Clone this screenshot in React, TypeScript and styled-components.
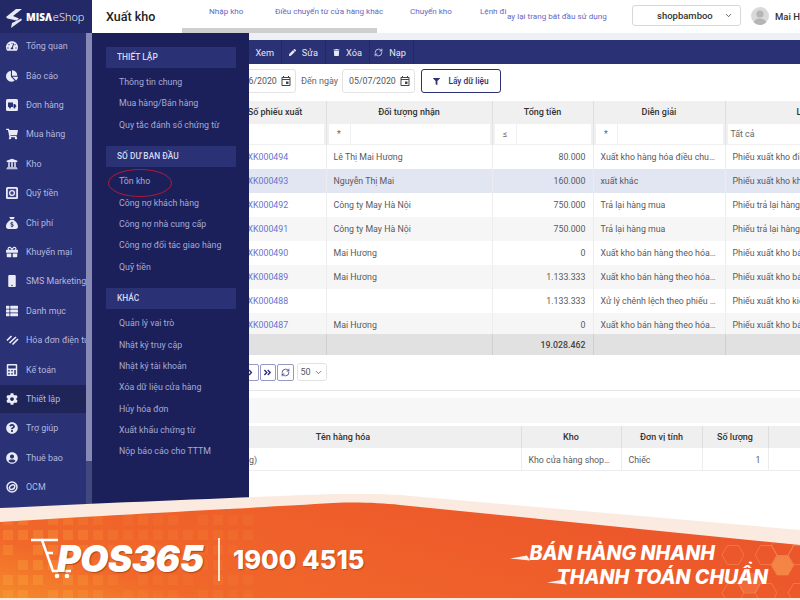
import React from 'react'
import styled, { createGlobalStyle } from 'styled-components'
import {
  FaTachometerAlt, FaChartPie, FaShoppingCart, FaUniversity, FaGift, FaMobile,
  FaThList, FaCalculator, FaCog, FaQuestionCircle, FaUserCircle, FaPen, FaTrash, FaFilter,
  FaAngleRight, FaAngleDoubleRight,
} from 'react-icons/fa'
import { FaSackDollar } from 'react-icons/fa6'
import { MdOutlineEvent } from 'react-icons/md'
import { RefreshCw, ChevronDown } from 'lucide-react'

const GlobalStyle = createGlobalStyle`
  html, body { margin: 0; padding: 0; background: #fff; }
  body { font-family: Roboto, "Liberation Sans", sans-serif; }
  * { box-sizing: border-box; }
`

const Page = styled.div`
  position: relative;
  width: 800px;
  height: 600px;
  overflow: hidden;
  display: flex;
  background: #fff;
`

/* ---------- left nav ---------- */
const Sidebar = styled.aside`
  position: relative;
  flex: 0 0 92px;
  height: 600px;
  background: #2b3175;
  overflow: hidden;
`
const Logo = styled.div`
  height: 33px;
  background: #232966;
  display: flex;
  align-items: center;
  gap: 3px;
  padding-left: 6px;
  color: #fff;
`
const LogoText = styled.span`
  font-family: "Open Sans", sans-serif;
  font-size: 11px;
  font-weight: 300;
  white-space: nowrap;
  b { font-weight: 800; font-size: 10px; margin-right: 1px; }
`
const Nav = styled.nav`
  margin-top: -1.4px;
`
const NavItem = styled.div<{ $active?: boolean }>`
  height: 29.4px;
  display: flex;
  align-items: center;
  border-block: 1.4px solid transparent;
  background: ${(p) => (p.$active ? '#1f2459' : 'transparent')};
  background-clip: padding-box;
  color: #b4b8de;
  font-size: 8.9px;
  white-space: nowrap;
`
const NavIcon = styled.span`
  flex: 0 0 26px;
  display: flex;
  justify-content: center;
  padding-right: 2px;
  color: #e9ebf7;
  font-size: 12px;
`
const NavScroll = styled.div`
  position: absolute;
  top: 33px;
  right: 0;
  bottom: 0;
  width: 6px;
  background: #41477f;
  &::before {
    content: '';
    display: block;
    height: 428px;
    background: #868ab4;
  }
`

const Flyout = styled.div`
  position: absolute;
  z-index: 3;
  left: 92px;
  top: 33px;
  width: 157px;
  height: 480px;
  background: #1b205a;
  padding: 14px 13px 0 14px;
`
const FlyHead = styled.div`
  height: 21px;
  background: #2b3175;
  color: #d5d8ee;
  font-size: 8.4px;
  font-weight: 500;
  line-height: 21px;
  padding-left: 11px;
`
const FlyItem = styled.div<{ $marked?: boolean }>`
  position: relative;
  height: 21.4px;
  line-height: 21.4px;
  padding-left: 13px;
  color: #a6aad4;
  font-size: 8.8px;
  white-space: nowrap;
  ${(p) =>
    p.$marked &&
    `&::after {
      content: '';
      position: absolute;
      left: 2px;
      top: -2px;
      width: 62px;
      height: 26px;
      border: 1.5px solid #a81a3a;
      border-radius: 50%;
    }`}
`
const FlyGroup = styled.div`
  padding: 4px 0 10px;
`

/* ---------- main ---------- */
const Main = styled.main`
  flex: 1;
  min-width: 0;
  display: flex;
  flex-direction: column;
  overflow: hidden;
`
const TopBar = styled.header`
  position: relative;
  flex: 0 0 33px;
  display: flex;
  background: #fff;
`
const Title = styled.div`
  flex: 0 0 117px;
  padding: 9px 0 0 14px;
  font-size: 12.5px;
  font-weight: 500;
  color: #222;
`
const Tabs = styled.div`
  flex: 0 0 298px;
  display: flex;
  overflow: hidden;
  padding-top: 6px;
  white-space: nowrap;
`
const Tab = styled.span<{ $w: number }>`
  flex: 0 0 ${(p) => p.$w}px;
  font-size: 8.1px;
  color: #6169c4;
`
const TabThumb = styled.div`
  position: absolute;
  left: 90px;
  bottom: 0;
  width: 195px;
  height: 5px;
  background: #cfcfcf;
`
const BackLink = styled.span`
  flex: 0 0 108px;
  padding-top: 11px;
  font-size: 8.1px;
  color: #6169c4;
  white-space: nowrap;
`
const TopDivider = styled.span`
  width: 1px;
  height: 18px;
  margin-top: 8px;
  background: #e6e6e6;
`
const ShopSelect = styled.div`
  flex: 0 0 109px;
  height: 21px;
  margin: 5px 0 0 17px;
  border: 1px solid #d8d8d8;
  border-radius: 3px;
  display: flex;
  align-items: center;
  justify-content: space-between;
  padding: 0 7px 0 24px;
  font-size: 9.5px;
  font-weight: 500;
  color: #333;
`
const Avatar = styled.span`
  flex: 0 0 18px;
  height: 18px;
  margin: 7px 0 0 10px;
  border-radius: 50%;
  background: #d9d9d9;
  overflow: hidden;
`
const UserName = styled.span`
  margin: 11px 0 0 6px;
  font-size: 9.5px;
  font-weight: 500;
  color: #333;
  white-space: nowrap;
`
const Strip = styled.div`
  flex: 0 0 7px;
  background: #eff0f3;
`
const Toolbar = styled.div`
  flex: 0 0 24px;
  display: flex;
  padding-left: 155px;
  background: #2b3175;
  color: #e6e8f5;
  font-size: 9.2px;
`
const ToolButton = styled.div<{ $w: number }>`
  flex: 0 0 ${(p) => p.$w}px;
  display: flex;
  align-items: center;
  justify-content: flex-end;
  gap: 6px;
  padding-right: 7px;
  border-right: 1px solid #232966;
  svg { flex: none; }
`
const FilterRow = styled.div`
  flex: 0 0 37px;
  display: flex;
  align-items: flex-start;
  padding: 5px 0 0 112px;
  font-size: 9px;
  color: #666;
`
const DateInput = styled.div`
  flex: 0 0 73px;
  height: 24px;
  border: 1px solid #e3e3e3;
  border-radius: 3px;
  display: flex;
  align-items: center;
  justify-content: space-between;
  padding: 0 3px 0 6px;
  font-size: 8.8px;
  color: #555;
  svg { color: #444; font-size: 12px; }
`
const DateLabel = styled.span<{ $w: number }>`
  flex: 0 0 ${(p) => p.$w}px;
  overflow: hidden;
  line-height: 24px;
  padding-left: 5px;
  white-space: nowrap;
`
const FetchButton = styled.div`
  flex: 0 0 80px;
  height: 24px;
  margin-left: 6px;
  border: 1px solid #2b3175;
  border-radius: 3px;
  display: flex;
  align-items: center;
  justify-content: center;
  gap: 8px;
  font-size: 8.3px;
  font-weight: 500;
  color: #2b3175;
`

const Table = styled.table<{ $w: number }>`
  table-layout: fixed;
  border-collapse: collapse;
  flex: none;
  width: ${(p) => p.$w}px;
  font-size: 8.8px;
  color: #555;
`
const Th = styled.th`
  height: 22px;
  padding: 0 4px;
  background: #f0f0f0;
  border-right: 1px solid #dedede;
  color: #333;
  font-size: 9px;
  font-weight: 500;
  white-space: nowrap;
  overflow: hidden;
`
const FilterTd = styled.td`
  height: 22px;
  padding: 1px 2px 1px 2px;
  background: #f0f0f0;
  border-right: 1px solid #e4e4e4;
`
const FilterBox = styled.div`
  height: 20px;
  display: flex;
  gap: 1px;
  color: #666;
  font-size: 8.8px;
`
const Op = styled.span`
  flex: 0 0 21px;
  background: #fff;
  text-align: center;
  line-height: 21px;
`
const Field = styled.span`
  flex: 1;
  background: #fff;
  padding-left: 3px;
  line-height: 20px;
`
const Tr = styled.tr<{ $bg: string }>`
  background: ${(p) => p.$bg};
  &:last-child td { height: 21px; padding-top: 3px; }
`
const Td = styled.td<{ $right?: boolean; $link?: boolean }>`
  height: 24px;
  padding: 0 7px 0 ${(p) => (p.$link ? 23 : 7)}px;
  border-right: 1px solid #ededed;
  text-align: ${(p) => (p.$right ? 'right' : 'left')};
  color: ${(p) => (p.$link ? '#6a72cf' : '#5a5a5a')};
  white-space: nowrap;
  overflow: hidden;
  text-overflow: ellipsis;
`
const TotalTd = styled.td`
  height: 21px;
  padding: 0 7px 0 5px;
  background: #e1e1e1;
  border-right: 1px solid #cfcfcf;
  text-align: right;
  font-size: 8.8px;
  font-weight: 500;
  color: #444;
`
const Pager = styled.div`
  flex: 0 0 35px;
  display: flex;
  align-items: flex-start;
  gap: 1px;
  padding: 9px 0 0 150px;
`
const PageButton = styled.span`
  flex: 0 0 16.5px;
  height: 17px;
  border: 1px solid #9599c4;
  border-radius: 2px;
  display: flex;
  align-items: center;
  justify-content: center;
  color: #2b3175;
  font-size: 9px;
`
const PageSize = styled.span`
  flex: 0 0 30px;
  height: 18px;
  margin: -1px 0 0 2px;
  border: 1px solid #e2e2e2;
  border-radius: 3px;
  display: flex;
  align-items: center;
  justify-content: space-between;
  padding: 0 3px 0 3px;
  font-size: 9px;
  color: #555;
`
const Rule = styled.div`
  flex: 0 0 1px;
  background: #e6e6e6;
`
const DetailBand = styled.div`
  flex: 0 0 25px;
  margin: 7px 0 3px;
  background: #f7f7f7;
`
const DetailTh = styled(Th)`
  height: 22px;
  background: #efefef;
`
const DetailTd = styled(Td)`
  height: 22px;
  padding-top: 2px;
  border-bottom: 1px solid #ededed;
`

/* ---------- promo banner ---------- */
const Banner = styled.div`
  position: absolute;
  z-index: 5;
  left: 0;
  right: 0;
  bottom: 0;
  height: 106px;
  display: flex;
  justify-content: space-between;
`
const BannerArt = styled.svg`
  position: absolute;
  inset: 0;
`
const Brand = styled.div`
  position: relative;
  display: flex;
  align-items: center;
  padding: 24px 0 0 31px;
  height: 106px;
  color: #fff;
`
const PosText = styled.span`
  margin-left: -18px;
  font-family: Inter, sans-serif;
  font-size: 36.5px;
  font-weight: 900;
  font-style: italic;
  letter-spacing: -0.6px;
  text-shadow: 1px 1px 1px rgba(130, 50, 10, 0.6);
`
const BrandRule = styled.span`
  width: 1.5px;
  height: 43px;
  margin: 0 13px 0 15px;
  background: #fbe6d5;
`
const Hotline = styled.span`
  font-family: Inter, sans-serif;
  font-size: 25.6px;
  font-weight: 800;
  text-shadow: 1px 1px 1px rgba(130, 50, 10, 0.5);
`
const Slogan = styled.div`
  position: relative;
  display: flex;
  flex-direction: column;
  align-items: flex-end;
  gap: 3px;
  padding: 49px 32px 0 0;
  color: #fff;
  font-family: Inter, sans-serif;
  font-size: 19.6px;
  line-height: 21px;
  font-weight: 800;
  font-style: italic;
  white-space: nowrap;
`
const SloganLine = styled.div<{ $indent: number }>`
  margin-right: ${(p) => p.$indent}px;
`

/* ---------- data ---------- */
const navItems: [React.ReactNode, string, boolean?][] = [
  [<FaTachometerAlt />, 'Tổng quan'],
  [<FaChartPie />, 'Báo cáo'],
  [
    <svg width="12" height="12" viewBox="0 0 12 12">
      <rect width="12" height="12" rx="1.5" fill="#e9ebf7" />
      <path d="M2 3.5h5v4.5H2zM7.5 5H9l1.2 1.5V8H7.5z" fill="#2b3175" />
      <circle cx="4" cy="8.6" r="1" fill="#2b3175" />
      <circle cx="8.4" cy="8.6" r="1" fill="#2b3175" />
    </svg>,
    'Đơn hàng',
  ],
  [<FaShoppingCart />, 'Mua hàng'],
  [<FaUniversity />, 'Kho'],
  [
    <svg width="12" height="12" viewBox="0 0 12 12">
      <rect width="12" height="12" rx="1.5" fill="#e9ebf7" />
      <rect x="1.8" y="1.8" width="8.4" height="8.4" fill="#3a4080" />
      <circle cx="6" cy="6" r="2.4" fill="none" stroke="#e9ebf7" strokeWidth="1.3" />
    </svg>,
    'Quỹ tiền',
  ],
  [<FaSackDollar />, 'Chi phí'],
  [<FaGift />, 'Khuyến mại'],
  [<FaMobile />, 'SMS Marketing'],
  [<FaThList />, 'Danh mục'],
  [
    <svg width="13" height="12" viewBox="0 0 13 12" fill="none" stroke="currentColor" strokeWidth="1.7">
      <path d="M1 6.5 5.5 2M3.5 9 10 3M6.5 10.5 12 5" />
    </svg>,
    'Hóa đơn điện tử',
  ],
  [<FaCalculator />, 'Kế toán'],
  [<FaCog />, 'Thiết lập', true],
  [<FaQuestionCircle />, 'Trợ giúp'],
  [<FaUserCircle />, 'Thuê bao'],
  [
    <svg width="12" height="12" viewBox="0 0 12 12" fill="none" stroke="currentColor" strokeWidth="1.5">
      <circle cx="6" cy="6" r="5" />
      <path d="M3 7.5C4 3.5 8 3 9 5M9 4.8C8.5 8.5 5 9.5 3.4 7.6" />
    </svg>,
    'OCM',
  ],
]

const rows: { code: string; who: string; total: string; note: string; kind: string; bg: string }[] = [
  { code: 'XK000494', who: 'Lê Thị Mai Hương', total: '80.000', note: 'Xuất kho hàng hóa điều chuyển cửa hàng', kind: 'Phiếu xuất kho điều chuyển', bg: '#fff' },
  { code: 'XK000493', who: 'Nguyễn Thị Mai', total: '160.000', note: 'xuất khác', kind: 'Phiếu xuất kho khác', bg: '#e2e5f2' },
  { code: 'XK000492', who: 'Công ty May Hà Nội', total: '750.000', note: 'Trả lại hàng mua', kind: 'Phiếu trả lại hàng mua', bg: '#fff' },
  { code: 'XK000491', who: 'Công ty May Hà Nội', total: '750.000', note: 'Trả lại hàng mua', kind: 'Phiếu trả lại hàng mua', bg: '#f6f6f6' },
  { code: 'XK000490', who: 'Mai Hương', total: '0', note: 'Xuất kho bán hàng theo hóa đơn bán lẻ', kind: 'Phiếu xuất kho bán hàng', bg: '#fff' },
  { code: 'XK000489', who: 'Mai Hương', total: '1.133.333', note: 'Xuất kho bán hàng theo hóa đơn bán lẻ', kind: 'Phiếu xuất kho bán hàng', bg: '#f6f6f6' },
  { code: 'XK000488', who: '', total: '1.133.333', note: 'Xử lý chênh lệch theo phiếu kiểm kê', kind: 'Phiếu xuất kho kiểm kê', bg: '#fff' },
  { code: 'XK000487', who: 'Mai Hương', total: '0', note: 'Xuất kho bán hàng theo hóa đơn bán lẻ', kind: 'Phiếu xuất kho bán hàng', bg: '#f6f6f6' },
]

const pixels: [number, number, number][] = []
for (let r = 0; r < 6; r++) {
  for (let c = 0; c < 17; c++) {
    const h = (c * 7 + r * 13 + c * r * 3) % 5
    if (h === 4) continue
    const glow = Math.max(0, 1 - Math.hypot(c - 1.5, r - 4) / 7)
    pixels.push([c * 15 + 3, 21 + r * 15, 0.08 + glow * 0.3 + h * 0.015])
  }
}

const hexes: [number, number, string][] = [
  [733, 61, 'none'], [766, 61, 'none'], [799, 61, 'none'], [782.5, 52, 'none'],
  [782.5, 71.5, '#f8a457'], [749.5, 89.5, '#f4784a'], [733, 99, 'none'], [766, 99, 'none'], [799, 99, 'none'],
]

const hexPath = (x: number, y: number, r = 11) =>
  [0, 1, 2, 3, 4, 5]
    .map((i) => {
      const a = (Math.PI / 3) * i
      return `${(x + r * Math.cos(a)).toFixed(1)},${(y + r * Math.sin(a)).toFixed(1)}`
    })
    .join(' ')

const orangeEdge = 'M0 28C130 20 250 14 333 9C360 8 380 9 400 11L800 51V104H0Z'

function App() {
  return (
    <Page>
      <GlobalStyle />
      <Sidebar>
        <Logo>
          <svg width="17" height="20" viewBox="0 0 17 20" fill="#e8e9f2" style={{ marginTop: 2 }}>
            <path d="M0 9 10 1h6L7 8l6 2.5-2.5 2L1.5 10.5zM15 10.5l1 1.5-11 8 1-5z" />
          </svg>
          <LogoText>
            <b>MISΛ</b>eShop
          </LogoText>
        </Logo>
        <Nav>
          {navItems.map(([icon, label, active]) => (
            <NavItem key={label} $active={active}>
              <NavIcon>{icon}</NavIcon>
              {label}
            </NavItem>
          ))}
        </Nav>
        <NavScroll />
      </Sidebar>

      <Flyout>
        <FlyHead>THIẾT LẬP</FlyHead>
        <FlyGroup>
          <FlyItem>Thông tin chung</FlyItem>
          <FlyItem>Mua hàng/Bán hàng</FlyItem>
          <FlyItem>Quy tắc đánh số chứng từ</FlyItem>
        </FlyGroup>
        <FlyHead>SỐ DƯ BAN ĐẦU</FlyHead>
        <FlyGroup>
          <FlyItem $marked>Tồn kho</FlyItem>
          <FlyItem>Công nợ khách hàng</FlyItem>
          <FlyItem>Công nợ nhà cung cấp</FlyItem>
          <FlyItem>Công nợ đối tác giao hàng</FlyItem>
          <FlyItem>Quỹ tiền</FlyItem>
        </FlyGroup>
        <FlyHead>KHÁC</FlyHead>
        <FlyGroup>
          <FlyItem>Quản lý vai trò</FlyItem>
          <FlyItem>Nhật ký truy cập</FlyItem>
          <FlyItem>Nhật ký tài khoản</FlyItem>
          <FlyItem>Xóa dữ liệu cửa hàng</FlyItem>
          <FlyItem>Hủy hóa đơn</FlyItem>
          <FlyItem>Xuất khẩu chứng từ</FlyItem>
          <FlyItem>Nộp báo cáo cho TTTM</FlyItem>
        </FlyGroup>
      </Flyout>

      <Main>
        <TopBar>
          <Title>Xuất kho</Title>
          <Tabs>
            <Tab $w={66}>Nhập kho</Tab>
            <Tab $w={135}>Điều chuyển từ cửa hàng khác</Tab>
            <Tab $w={70}>Chuyển kho</Tab>
            <Tab $w={27}>Lệnh đi</Tab>
          </Tabs>
          <BackLink>ay lại trang bắt đầu sử dụng</BackLink>
          <TopDivider />
          <ShopSelect>
            shopbamboo
            <ChevronDown size={9} />
          </ShopSelect>
          <Avatar>
            <svg width="18" height="18" viewBox="0 0 18 18" fill="#b5b5b5">
              <circle cx="9" cy="7" r="3.6" />
              <path d="M2.5 18c0-5 3-6.5 6.5-6.5s6.5 1.5 6.5 6.5z" />
            </svg>
          </Avatar>
          <UserName>Mai Hương</UserName>
          <TabThumb />
        </TopBar>
        <Strip />
        <Toolbar>
          <ToolButton $w={35}>Xem</ToolButton>
          <ToolButton $w={44}>
            <FaPen size={7} />
            Sửa
          </ToolButton>
          <ToolButton $w={44}>
            <FaTrash size={7} />
            Xóa
          </ToolButton>
          <ToolButton $w={44}>
            <RefreshCw size={9} />
            Nạp
          </ToolButton>
        </Toolbar>
        <FilterRow>
          <DateLabel $w={19}>Từ</DateLabel>
          <DateInput>
            05/06/2020
            <MdOutlineEvent />
          </DateInput>
          <DateLabel $w={46}>Đến ngày</DateLabel>
          <DateInput>
            05/07/2020
            <MdOutlineEvent />
          </DateInput>
          <FetchButton>
            <FaFilter size={7} />
            Lấy dữ liệu
          </FetchButton>
        </FilterRow>

        <Table $w={837}>
          <colgroup>
            <col style={{ width: 132 }} />
            <col style={{ width: 102 }} />
            <col style={{ width: 166 }} />
            <col style={{ width: 101 }} />
            <col style={{ width: 132 }} />
            <col style={{ width: 204 }} />
          </colgroup>
          <thead>
            <tr>
              <Th />
              <Th>Số phiếu xuất</Th>
              <Th>Đối tượng nhận</Th>
              <Th>Tổng tiền</Th>
              <Th>Diễn giải</Th>
              <Th>Loại phiếu xuất</Th>
            </tr>
            <tr>
              <FilterTd />
              <FilterTd>
                <FilterBox>
                  <Field />
                </FilterBox>
              </FilterTd>
              <FilterTd>
                <FilterBox>
                  <Op>*</Op>
                  <Field />
                </FilterBox>
              </FilterTd>
              <FilterTd>
                <FilterBox>
                  <Op>≤</Op>
                  <Field />
                </FilterBox>
              </FilterTd>
              <FilterTd>
                <FilterBox>
                  <Op>*</Op>
                  <Field />
                </FilterBox>
              </FilterTd>
              <FilterTd>
                <FilterBox>
                  <Field>Tất cả</Field>
                </FilterBox>
              </FilterTd>
            </tr>
          </thead>
          <tbody>
            {rows.map((r) => (
              <Tr key={r.code} $bg={r.bg}>
                <Td />
                <Td $link>{r.code}</Td>
                <Td>{r.who}</Td>
                <Td $right>{r.total}</Td>
                <Td>{r.note}</Td>
                <Td>{r.kind}</Td>
              </Tr>
            ))}
          </tbody>
          <tfoot>
            <tr>
              <TotalTd />
              <TotalTd />
              <TotalTd />
              <TotalTd>19.028.462</TotalTd>
              <TotalTd />
              <TotalTd />
            </tr>
          </tfoot>
        </Table>

        <Pager>
          <PageButton>
            <FaAngleRight />
          </PageButton>
          <PageButton>
            <FaAngleDoubleRight />
          </PageButton>
          <PageButton>
            <RefreshCw size={9} />
          </PageButton>
          <PageSize>
            50
            <ChevronDown size={9} />
          </PageSize>
        </Pager>
        <Rule />
        <DetailBand />
        <Table $w={808}>
          <colgroup>
            <col style={{ width: 73 }} />
            <col style={{ width: 356 }} />
            <col style={{ width: 100 }} />
            <col style={{ width: 81 }} />
            <col style={{ width: 66 }} />
            <col style={{ width: 132 }} />
          </colgroup>
          <thead>
            <tr>
              <DetailTh>Mã hàng</DetailTh>
              <DetailTh>Tên hàng hóa</DetailTh>
              <DetailTh>Kho</DetailTh>
              <DetailTh>Đơn vị tính</DetailTh>
              <DetailTh>Số lượng</DetailTh>
              <DetailTh>Đơn giá</DetailTh>
            </tr>
          </thead>
          <tbody>
            <tr>
              <DetailTd />
              <DetailTd>Áo sơ mi nam (Trắng)</DetailTd>
              <DetailTd>Kho cửa hàng shopbamboo</DetailTd>
              <DetailTd>Chiếc</DetailTd>
              <DetailTd $right>1</DetailTd>
              <DetailTd />
            </tr>
          </tbody>
        </Table>
      </Main>

      <Banner>
        <BannerArt width="800" height="106" viewBox="0 0 800 106">
          <defs>
            <linearGradient id="sun" x1="0" y1="1" x2="1" y2="0.6">
              <stop offset="0" stopColor="#f58a2c" />
              <stop offset="0.22" stopColor="#f1682a" />
              <stop offset="1" stopColor="#ec562b" />
            </linearGradient>
            <clipPath id="edge">
              <path d={orangeEdge} />
            </clipPath>
          </defs>
          <path d="M0 14C100 9 250 3 333 0C360 -1 380 0 400 1L800 36V106H0Z" fill="#fbeadf" />
          <path d={orangeEdge} fill="url(#sun)" />
          <g clipPath="url(#edge)">
            {pixels.map(([x, y, o]) => (
              <rect key={`${x}-${y}`} x={x} y={y} width="10" height="10" fill="#f9a53c" opacity={o} />
            ))}
            {hexes.map(([x, y, fill]) => (
              <polygon
                key={`${x}-${y}`}
                points={hexPath(x, y)}
                fill={fill}
                stroke="#f79a5c"
                strokeWidth="0.8"
                opacity="0.6"
              />
            ))}
          </g>
          <path d="M510 64.5 527 61.5 530 66.5ZM547 88.5 564 85.5 567 90.5Z" fill="#fff" opacity="0.9" />
        </BannerArt>
        <Brand>
          <svg width="44" height="42" viewBox="0 0 44 42" fill="none" stroke="#fff" strokeWidth="2.6" style={{ flex: 'none' }}>
            <path d="M0 2h11l11 31h18" />
            <path d="M11 2h16M16 15h6" />
            <circle cx="26" cy="38" r="2.3" fill="#fff" stroke="none" />
            <circle cx="36" cy="38" r="2.3" fill="#fff" stroke="none" />
          </svg>
          <PosText>POS365</PosText>
          <BrandRule />
          <Hotline>1900 4515</Hotline>
        </Brand>
        <Slogan>
          <SloganLine $indent={53}>BÁN HÀNG NHANH</SloganLine>
          <SloganLine $indent={0}>THANH TOÁN CHUẨN</SloganLine>
        </Slogan>
      </Banner>
    </Page>
  )
}

export default App
